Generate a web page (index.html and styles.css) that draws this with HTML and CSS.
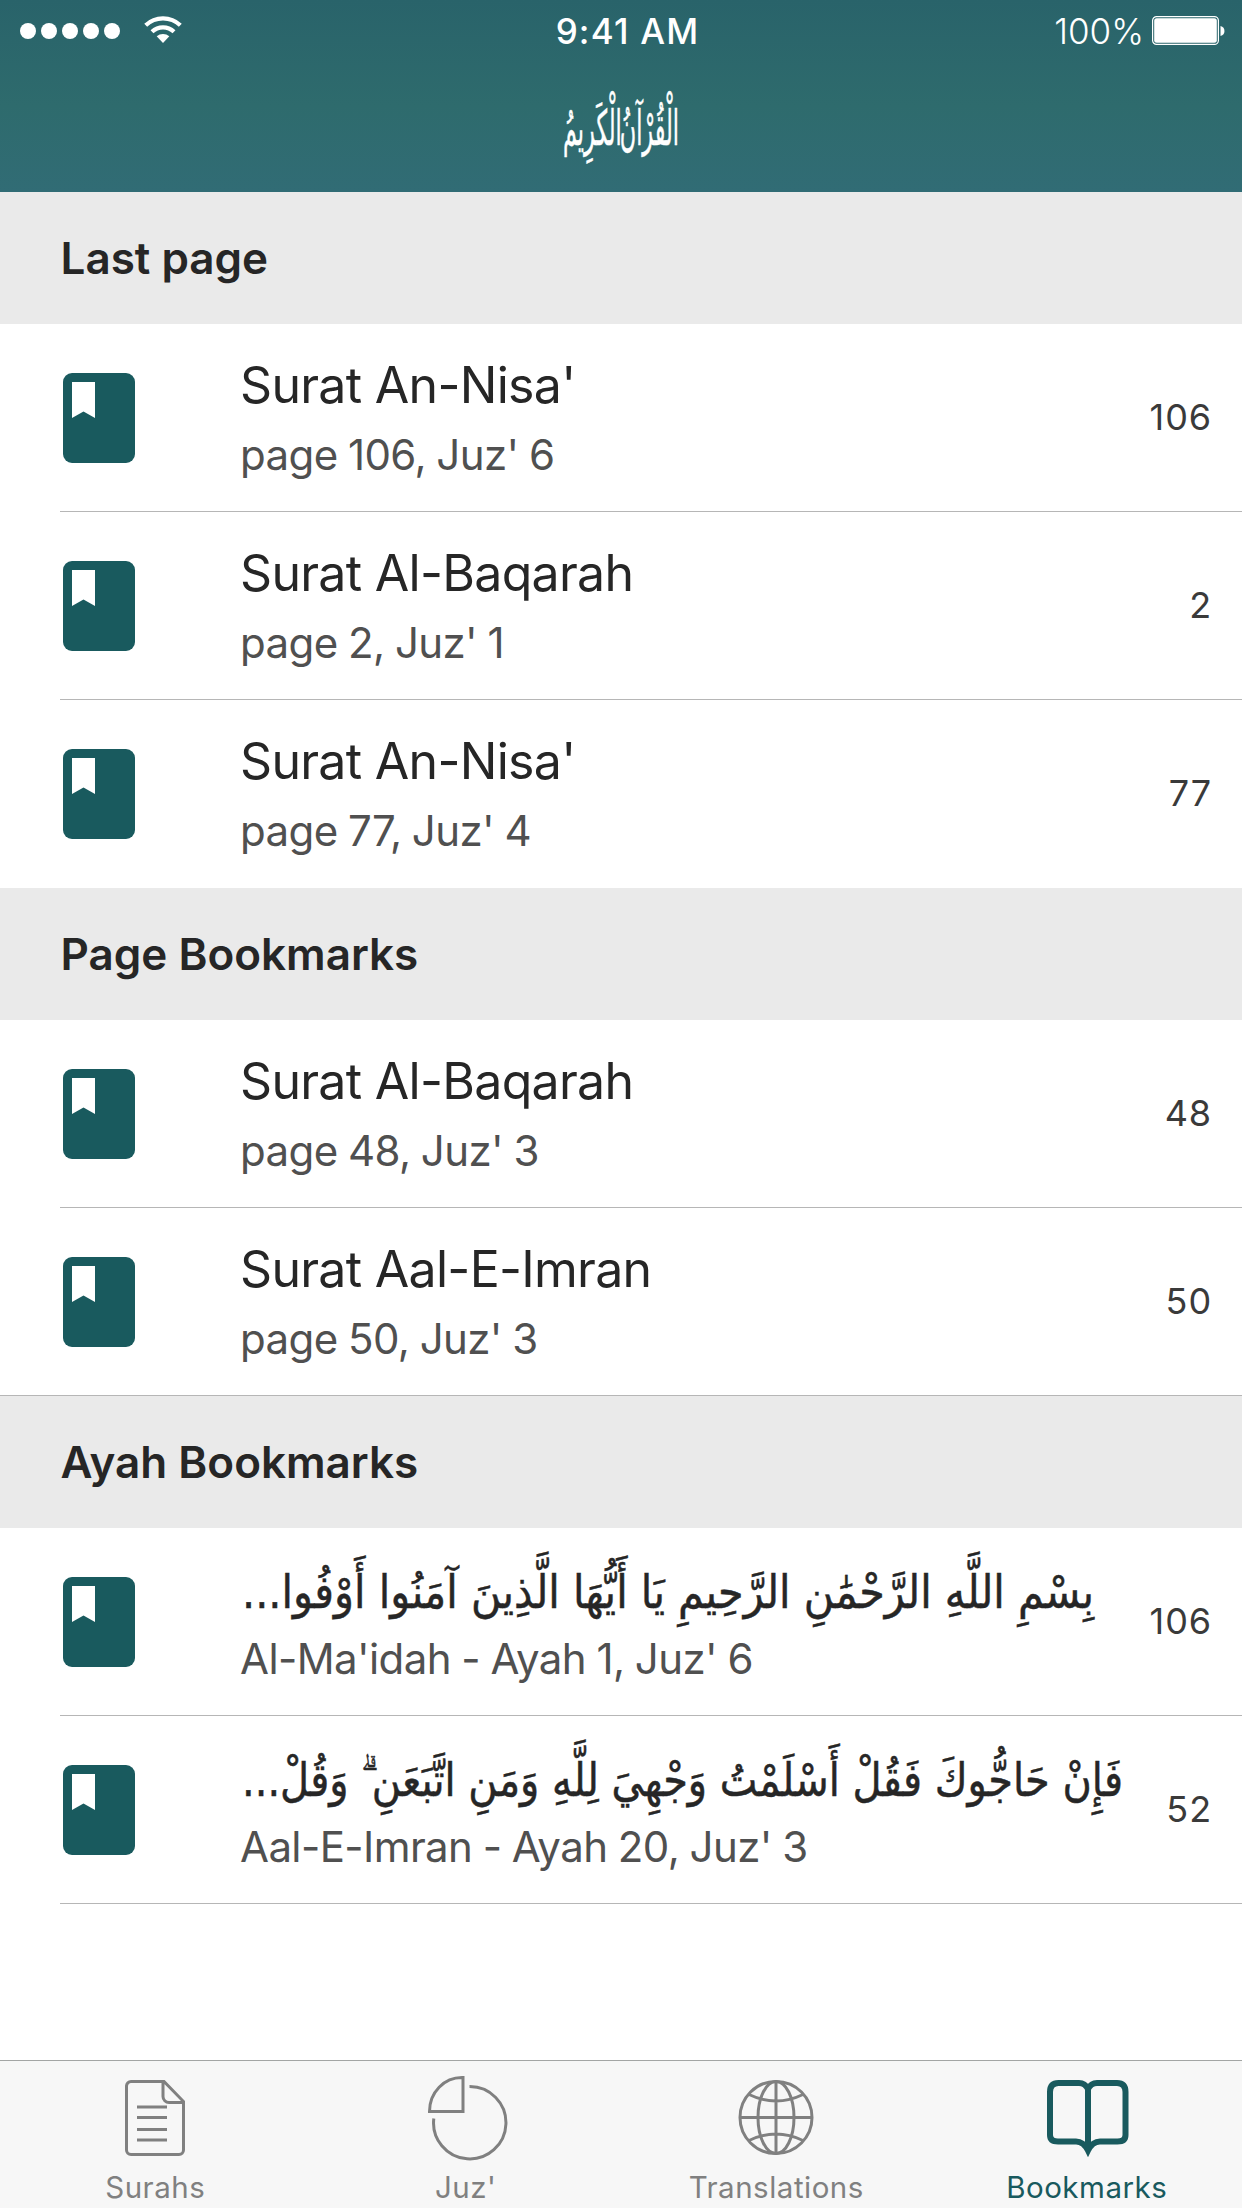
FILE: index.html
```html
<!DOCTYPE html>
<html lang="en">
<head>
<meta charset="utf-8">
<title>Bookmarks</title>
<link rel="stylesheet" href="styles.css">
</head>
<body>
<svg class="defs" aria-hidden="true">
  <symbol id="bookmark" viewBox="0 0 72 90">
    <rect width="72" height="90" rx="9" fill="#195a5e"/>
    <path d="M9 9h23v36l-11.500-6.500L9 45z" fill="#fff"/>
  </symbol>
</svg>
<div class="screen">
  <header class="navbar">
    <div class="status">
      <div class="status-left">
        <svg width="100" height="16" viewBox="0 0 100 16" fill="#fff"><circle cx="8" cy="8" r="8"/><circle cx="29" cy="8" r="8"/><circle cx="50" cy="8" r="8"/><circle cx="71" cy="8" r="8"/><circle cx="92" cy="8" r="8"/></svg>
        <svg class="wifi" width="38" height="28" viewBox="0 0 38 28" fill="none" stroke="#fff" stroke-width="4.200"><path d="M1.700 9.300a25 25 0 0 1 34.600 0M8 15.700a16 16 0 0 1 22 0"/><path d="M12.700 20.300a9.500 9.500 0 0 1 12.600 0L19 27z" fill="#fff" stroke="none"/></svg>
      </div>
      <div class="time">9:41 AM</div>
      <div class="status-right">
        <span class="percent">100%</span>
        <svg width="74" height="30" viewBox="0 0 74 30"><rect x=".6" y=".6" width="65.800" height="27.800" rx="4" fill="none" stroke="#fff" stroke-width="1.200"/><rect x="2.200" y="2.200" width="62.600" height="24.600" rx="2.500" fill="#fff"/><path d="M68.500 10c5.300 1 5.300 9 0 10z" fill="#fff"/></svg>
      </div>
    </div>
    <div class="brand"><svg width="140" height="110" viewBox="0 0 140 110"><text class="brand-text" x="70" y="69" textLength="116" lengthAdjust="spacingAndGlyphs" text-anchor="middle">الْقُرْآنُ الْكَرِيمُ</text></svg></div>
  </header>

  <main class="list">
    <h2 class="section">Last page</h2>
    <div class="row"><svg class="icon"><use href="#bookmark"/></svg><div class="body"><div class="title">Surat An-Nisa'</div><div class="sub">page 106, Juz' 6</div></div><div class="num">106</div></div>
    <div class="row"><svg class="icon"><use href="#bookmark"/></svg><div class="body"><div class="title">Surat Al-Baqarah</div><div class="sub">page 2, Juz' 1</div></div><div class="num">2</div></div>
    <div class="row last"><svg class="icon"><use href="#bookmark"/></svg><div class="body"><div class="title">Surat An-Nisa'</div><div class="sub">page 77, Juz' 4</div></div><div class="num">77</div></div>

    <h2 class="section">Page Bookmarks</h2>
    <div class="row"><svg class="icon"><use href="#bookmark"/></svg><div class="body"><div class="title">Surat Al-Baqarah</div><div class="sub">page 48, Juz' 3</div></div><div class="num">48</div></div>
    <div class="row full"><svg class="icon"><use href="#bookmark"/></svg><div class="body"><div class="title">Surat Aal-E-Imran</div><div class="sub">page 50, Juz' 3</div></div><div class="num">50</div></div>

    <h2 class="section">Ayah Bookmarks</h2>
    <div class="row"><svg class="icon"><use href="#bookmark"/></svg><div class="body"><svg class="ayah" viewBox="0 0 884 68"><text x="854" y="50" direction="rtl" textLength="852" lengthAdjust="spacingAndGlyphs">بِسْمِ اللَّهِ الرَّحْمَٰنِ الرَّحِيمِ يَا أَيُّهَا الَّذِينَ آمَنُوا أَوْفُوا...</text></svg><div class="sub">Al-Ma'idah - Ayah 1, Juz' 6</div></div><div class="num">106</div></div>
    <div class="row"><svg class="icon"><use href="#bookmark"/></svg><div class="body"><svg class="ayah" viewBox="0 0 884 68"><text x="883" y="50" direction="rtl" textLength="881" lengthAdjust="spacingAndGlyphs">فَإِنْ حَاجُّوكَ فَقُلْ أَسْلَمْتُ وَجْهِيَ لِلَّهِ وَمَنِ اتَّبَعَنِ ۗ وَقُلْ...</text></svg><div class="sub">Aal-E-Imran - Ayah 20, Juz' 3</div></div><div class="num">52</div></div>
  </main>

  <nav class="tabs">
    <div class="tab"><svg width="90" height="90" viewBox="0 0 90 90" fill="none" stroke="#808080" stroke-width="3"><path d="M54 10.500H21a4.500 4.500 0 0 0-4.500 4.500v64a4.500 4.500 0 0 0 4.500 4.500h48a4.500 4.500 0 0 0 4.500-4.500V30.500zM53 11v14.500a6 6 0 0 0 6 6h15M27 36h30M27 46.500h30M27 58.500h30M27 69h30"/></svg><span>Surahs</span></div>
    <div class="tab"><svg width="90" height="90" viewBox="0 0 90 90" fill="none" stroke="#808080" stroke-width="3"><path d="M42 6.500v34H8.500C8.500 21.500 23 6 42 6.500z"/><path d="M48.500 15.500a36.200 36.200 0 1 1-35.700 32"/></svg><span>Juz'</span></div>
    <div class="tab"><svg width="90" height="90" viewBox="0 0 90 90" fill="none" stroke="#808080" stroke-width="3"><circle cx="45" cy="46.500" r="36"/><ellipse cx="45" cy="46.500" rx="18" ry="36"/><path d="M45 10.500v72M9 46.500h72M18 23.500q27 13 54 0M18 69.500q27-13 54 0"/></svg><span>Translations</span></div>
    <div class="tab active"><svg width="90" height="90" viewBox="0 0 90 90" fill="none" stroke="#195a5e" stroke-width="6"><path d="M46 18q-3-6-9-6H16.500q-8.500 0-8.500 9v43q0 6.500 8 6.500H34q7.500 0 12 9 4.500-9 12-9h17.500q8 0 8-6.500V21q0-9-8.500-9H55q-6 0-9 6zV75"/></svg><span>Bookmarks</span></div>
  </nav>
</div>
</body>
</html>
```
FILE: styles.css
```css
* { box-sizing: border-box; }
body { margin: 0; background: #fff; font-family: Inter, "Liberation Sans", sans-serif; color: #262626; }
.defs { display: none; }
.screen { display: flex; flex-direction: column; width: 1242px; height: 2208px; overflow: hidden; }

.navbar { height: 192px; background: linear-gradient(#29636a, #2e6b6d 55%, #316c75); color: #fff; }
.status { display: grid; grid-template-columns: 1fr auto 1fr; align-items: center; height: 60px; padding: 0 16px 0 20px; font-size: 35px; line-height: 60px; }
.status-left, .status-right { display: flex; align-items: center; }
.status-left { gap: 24px; }
.wifi { margin-bottom: 1px; }
.status-right { justify-content: flex-end; gap: 8px; }
.time { padding: 1px 0 0 9px; font-weight: 550; letter-spacing: 1.2px; }
.percent { padding-top: 1px; font-weight: 350; letter-spacing: 0; }
.brand { display: flex; justify-content: center; padding-top: 16px; }
.brand svg { overflow: visible; }
.brand-text { font-family: "DejaVu Sans", sans-serif; font-size: 49px; word-spacing: -20px; fill: #fff; stroke: #fff; stroke-width: .5px; }

.list { flex: 1; }
.section { display: flex; align-items: center; height: 132px; margin: 0; padding: 0 0 0 60.5px; background: #eaeaea; font-size: 44px; font-weight: 600; }
.row { display: flex; height: 188px; margin-left: 60px; padding: 0 30px 0 3px; border-bottom: 1px solid #b6b6b6; }
.row.last { border-bottom-color: transparent; }
.row.full { margin-left: 0; padding-left: 63px; }
.icon { width: 72px; height: 90px; margin-top: 49px; flex: none; }
.body { width: 884px; flex: none; margin-left: 105px; padding-top: 30px; white-space: nowrap; }
.title { height: 68px; font-size: 50px; line-height: 62px; letter-spacing: -.7px; word-spacing: 0; }
.ayah { display: block; width: 884px; height: 68px; overflow: visible; font-family: "DejaVu Sans", sans-serif; font-size: 46px; fill: #262626; stroke: #262626; stroke-width: .5px; }
.sub { font-size: 42px; line-height: 66px; letter-spacing: -.6px; word-spacing: -.8px; color: #505050; }
.num { flex: 1; text-align: right; font-size: 36px; line-height: 186px; letter-spacing: .9px; white-space: nowrap; color: #3a3a3a; }

.tabs { display: grid; grid-template-columns: repeat(4, 1fr); height: 148px; border-top: 1px solid #a3a5a4; background: #f7f7f7; color: #808080; }
.tab { display: flex; flex-direction: column; align-items: center; padding-top: 10px; font-size: 29.5px; line-height: 36px; letter-spacing: .5px; }
.tab span { padding-top: 8px; }
.active { color: #195a5e; }
```
